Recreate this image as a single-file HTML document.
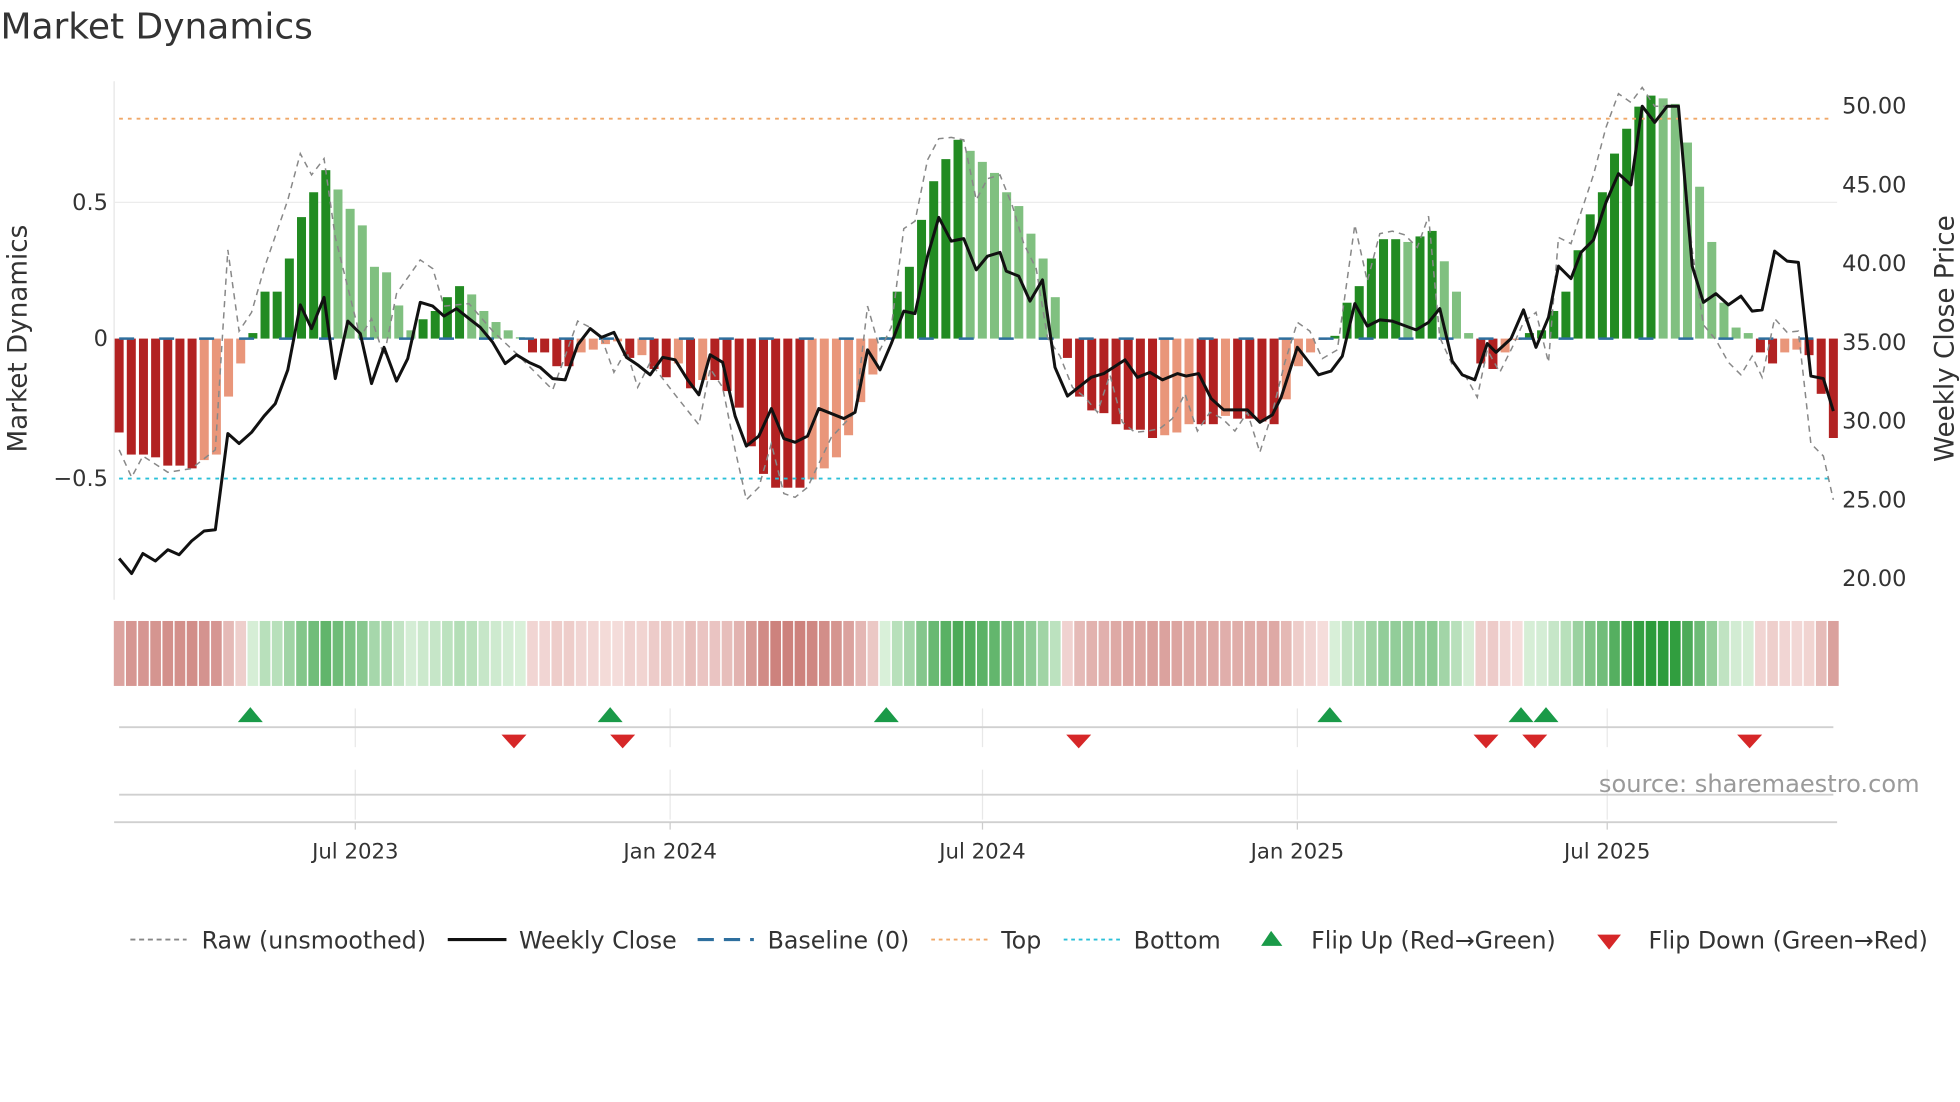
<!DOCTYPE html>
<html><head><meta charset="utf-8"><style>
html,body{margin:0;padding:0;background:#fff;}
svg{display:block;font-family:"DejaVu Sans","Liberation Sans",sans-serif;}
</style></head><body>
<svg id="s" width="1960" height="1102" viewBox="0 0 1568 882" xmlns="http://www.w3.org/2000/svg">
<rect width="1568" height="882" fill="#fff"/>
<text x="0" y="31" font-size="28.8" fill="#333">Market Dynamics</text>
<line x1="91" y1="65" x2="91" y2="480" stroke="#e6e6e6" stroke-width="1"/>
<line x1="91" y1="162" x2="1470" y2="162" stroke="#ececec" stroke-width="1"/>
<g id="bars"></g>
<line x1="95" y1="95" x2="1467" y2="95" stroke="#f0a868" stroke-width="1.5" stroke-dasharray="3,4"/>
<line x1="95" y1="383" x2="1467" y2="383" stroke="#2bc0d8" stroke-width="1.5" stroke-dasharray="3,4"/>
<line x1="95" y1="271" x2="1467" y2="271" stroke="#2e6f9e" stroke-width="2" stroke-dasharray="12,20"/>
<polyline id="raw" fill="none" stroke="#888" stroke-width="1.2" stroke-dasharray="5,4"/>
<polyline id="close" fill="none" stroke="#111" stroke-width="2.4" stroke-linejoin="round"/>
<g font-size="18" fill="#333">
<text x="86" y="168" text-anchor="end">0.5</text>
<text x="86" y="277" text-anchor="end">0</text>
<text x="86" y="389" text-anchor="end">−0.5</text>
<text x="1474" y="91">50.00</text>
<text x="1474" y="154">45.00</text>
<text x="1474" y="217">40.00</text>
<text x="1474" y="280">35.00</text>
<text x="1474" y="343">30.00</text>
<text x="1474" y="406">25.00</text>
<text x="1474" y="469">20.00</text>
</g>
<text transform="translate(21,271) rotate(-90)" text-anchor="middle" font-size="21" fill="#333">Market Dynamics</text>
<text transform="translate(1563,271) rotate(-90)" text-anchor="middle" font-size="21" fill="#333">Weekly Close Price</text>
<g id="heat"></g>
<g stroke="#e8e8e8" stroke-width="1">
<line x1="284" y1="567" x2="284" y2="598"/><line x1="536" y1="567" x2="536" y2="598"/><line x1="786" y1="567" x2="786" y2="598"/><line x1="1038" y1="567" x2="1038" y2="598"/><line x1="1286" y1="567" x2="1286" y2="598"/>
<line x1="284" y1="616" x2="284" y2="656"/><line x1="536" y1="616" x2="536" y2="656"/><line x1="786" y1="616" x2="786" y2="656"/><line x1="1038" y1="616" x2="1038" y2="656"/><line x1="1286" y1="616" x2="1286" y2="656"/>
</g>
<line x1="95" y1="582" x2="1467" y2="582" stroke="#d0d0d0" stroke-width="1.5"/>
<line x1="95" y1="636" x2="1467" y2="636" stroke="#d0d0d0" stroke-width="1.5"/>
<line x1="91" y1="658" x2="1470" y2="658" stroke="#d0d0d0" stroke-width="1.5"/>
<g stroke="#ccc" stroke-width="1"><line x1="284" y1="658" x2="284" y2="664"/><line x1="536" y1="658" x2="536" y2="664"/><line x1="786" y1="658" x2="786" y2="664"/><line x1="1038" y1="658" x2="1038" y2="664"/><line x1="1286" y1="658" x2="1286" y2="664"/></g>
<g id="marks"></g>
<text x="1536" y="634" text-anchor="end" font-size="19.3" fill="#9a9a9a">source: sharemaestro.com</text>
<g font-size="17" fill="#333" text-anchor="middle">
<text x="284" y="687">Jul 2023</text><text x="536" y="687">Jan 2024</text><text x="786" y="687">Jul 2024</text><text x="1038" y="687">Jan 2025</text><text x="1286" y="687">Jul 2025</text>
</g>
<g font-size="19" fill="#333">
<line x1="104" y1="752" x2="149" y2="752" stroke="#888" stroke-width="1.5" stroke-dasharray="4,3"/>
<text x="161" y="759">Raw (unsmoothed)</text>
<line x1="358" y1="752" x2="405" y2="752" stroke="#111" stroke-width="2.5"/>
<text x="415" y="759">Weekly Close</text>
<line x1="558" y1="752" x2="603" y2="752" stroke="#2e6f9e" stroke-width="2.5" stroke-dasharray="13,8"/>
<text x="614" y="759">Baseline (0)</text>
<line x1="745" y1="752" x2="790" y2="752" stroke="#f0a868" stroke-width="1.5" stroke-dasharray="3,3"/>
<text x="801" y="759">Top</text>
<line x1="851" y1="752" x2="896" y2="752" stroke="#2bc0d8" stroke-width="1.5" stroke-dasharray="3,3"/>
<text x="907" y="759">Bottom</text>
<polygon points="1009,757 1017,745 1026,757" fill="#1a9a48"/>
<text x="1049" y="759">Flip Up (Red→Green)</text>
<polygon points="1278,748 1297,748 1287.5,760" fill="#d62728"/>
<text x="1319" y="759">Flip Down (Green→Red)</text>
</g>
</svg>
<script>
var V=[-0.34,-0.42,-0.42,-0.43,-0.46,-0.46,-0.47,-0.44,-0.42,-0.21,-0.09,0.02,0.17,0.17,0.29,0.44,0.53,0.61,0.54,0.47,0.41,0.26,0.24,0.12,0.03,0.07,0.10,0.15,0.19,0.16,0.10,0.06,0.03,0.005,-0.05,-0.05,-0.10,-0.10,-0.05,-0.04,-0.02,-0.01,-0.07,-0.06,-0.11,-0.14,-0.09,-0.18,-0.15,-0.15,-0.19,-0.25,-0.39,-0.49,-0.54,-0.54,-0.54,-0.51,-0.47,-0.43,-0.35,-0.23,-0.13,0.005,0.17,0.26,0.43,0.57,0.65,0.72,0.68,0.64,0.60,0.53,0.48,0.38,0.29,0.15,
-0.07,-0.21,-0.26,-0.27,-0.31,-0.33,-0.33,-0.36,-0.35,-0.34,-0.31,-0.31,-0.31,-0.28,-0.29,-0.29,-0.30,-0.31,-0.22,-0.10,-0.05,-0.005,
0.01,0.13,0.19,0.29,0.36,0.36,0.35,0.37,0.39,0.28,0.17,0.02,
-0.09,-0.11,-0.05,-0.005,
0.02,0.03,0.10,0.17,0.32,0.45,0.53,0.67,0.76,0.84,0.88,0.87,0.85,0.71,0.55,0.35,0.13,0.04,0.02,
-0.05,-0.09,-0.05,-0.04,-0.06,-0.20,-0.36];
var NS="http://www.w3.org/2000/svg";
function el(t,a,p){var e=document.createElementNS(NS,t);for(var k in a)e.setAttribute(k,a[k]);p.appendChild(e);return e;}
var n=V.length,x0=95,x1=1467,st=(x1-x0)/(n-1),bars=document.getElementById('bars'),heat=document.getElementById('heat');
for(var i=0;i<n;i++){var v=V[i],p=i?V[i-1]:0,x=x0+st*i,c;
 if(v>=0)c=(v>=p)?'#228b22':'#80c080';else c=(v<=p)?'#b22222':'#e9967a';
 var y=271-v*221;el('rect',{x:x-3.6,y:Math.min(y,271),width:7.2,height:Math.max(Math.abs(271-y),0.8),fill:c},bars);
 var col;
 if(v>=0){var t=Math.min(v/0.88,1);col='rgb('+Math.round(218-175*t)+','+Math.round(240-85*t)+','+Math.round(218-160*t)+')';}
 else{var t=Math.min(-v/0.54,1);col='rgb('+Math.round(245-40*t)+','+Math.round(222-92*t)+','+Math.round(220-95*t)+')';}
 el('rect',{x:x-st/2+0.6,y:497,width:st-1.2,height:52,fill:col},heat);
}
var C="95,447 105,459 114,443 124,449 134,440 143,444 153,433 163,425 172,424 182,347 191,355 201,346 211,333 220,323 230,296 240,244 249,263 259,238 268,303 278,257 288,267 297,307 307,278 317,305 326,287 336,242 346,245 355,253 365,247 375,255 384,262 394,274 404,291 413,284 423,290 432,294 442,303 452,304 462,276 472,263 481,270 491,266 501,286 510,292 520,300 530,286 540,288 550,304 559,316 568,284 578,290 588,333 597,357 607,349 617,327 627,351 636,354 646,349 655,327 665,331 675,335 684,330 694,280 704,296 713,275 723,249 732,251 742,205 751,174 761,193 771,191 781,216 790,205 800,202 805,217 815,221 824,241 834,224 844,294 854,317 873,302 883,299 900,288 910,302 920,298 930,304 942,299 949,301 959,299 969,319 979,328 998,328 1008,338 1018,332 1025,318 1038,278 1055,300 1065,297 1074,285 1084,243 1094,261 1104,256 1114,257 1133,264 1143,258 1152,247 1162,289 1170,300 1180,304 1190,275 1197,282 1209,271 1219,248 1229,278 1239,254 1247,213 1257,223 1265,202 1275,192 1285,162 1295,139 1305,148 1314,85 1324,98 1334,85 1343,85 1354,213 1363,242 1373,235 1383,244 1393,237 1402,249 1410,248 1420,201 1430,209 1439,210 1449,301 1459,303 1467,329";
document.getElementById('close').setAttribute('points',C);
var R="95,360 105,382 114,365 134,378 153,375 172,360 182,200 191,265 201,250 211,215 230,160 240,123 249,140 259,127 268,190 278,230 288,270 297,255 307,285 317,235 336,208 346,215 355,245 375,243 394,265 413,283 442,312 452,285 462,257 472,262 481,270 491,298 501,280 510,310 520,290 540,316 559,340 568,295 578,310 588,360 597,400 607,390 617,355 627,395 636,398 646,390 665,350 684,330 694,245 704,280 713,262 723,183 732,177 742,128 751,111 761,110 771,112 781,160 790,143 800,140 810,165 819,195 829,215 838,270 848,285 858,310 868,318 878,330 888,300 898,338 908,346 918,345 928,343 938,335 948,315 958,345 968,330 978,335 988,345 998,330 1008,362 1018,330 1028,290 1038,258 1048,265 1058,287 1070,280 1084,180 1094,225 1104,187 1114,185 1124,188 1134,198 1143,173 1152,270 1162,292 1172,300 1182,318 1190,280 1200,298 1210,278 1219,258 1229,250 1239,290 1247,190 1257,195 1265,170 1275,140 1285,102 1295,75 1305,82 1314,70 1324,85 1334,85 1343,85 1354,200 1363,260 1373,272 1383,290 1393,300 1402,285 1410,302 1420,255 1430,266 1439,265 1449,355 1459,365 1467,400";
document.getElementById('raw').setAttribute('points',R);
var m=document.getElementById('marks');
[200,488,709,1064,1217,1237].forEach(function(x){el('polygon',{points:(x-10)+',578 '+x+',566 '+(x+10)+',578',fill:'#1a9a48'},m);});
[411,498,863,1189,1228,1400].forEach(function(x){el('polygon',{points:(x-10)+',588 '+(x+10)+',588 '+x+',599',fill:'#d62728'},m);});
</script>
</body></html>
